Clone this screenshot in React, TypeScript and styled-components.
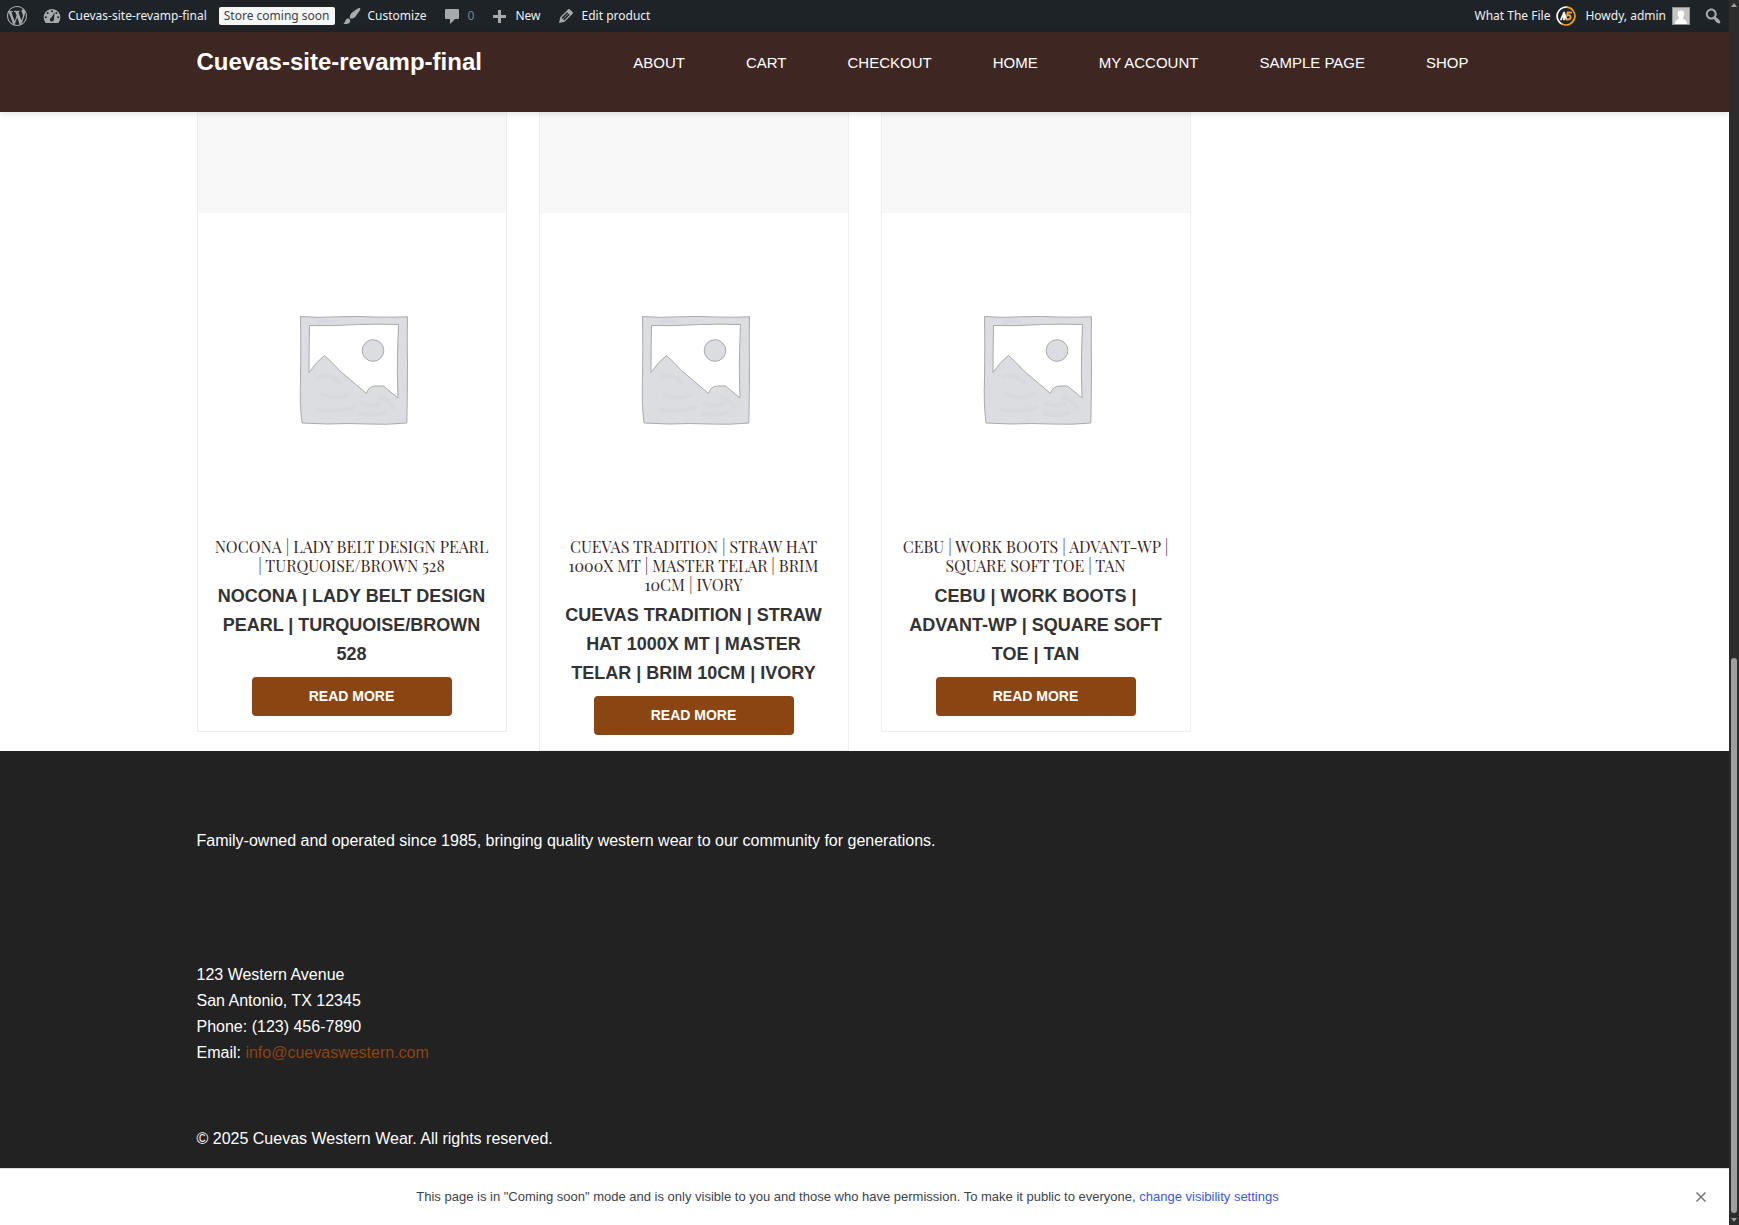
import React from "react";
import styled, { createGlobalStyle } from "styled-components";

const sans = `"Liberation Sans", Arial, Helvetica, sans-serif`;
const ui = `"Segoe UI", "Noto Sans", "Open Sans", sans-serif`;

const GlobalStyle = createGlobalStyle`
  *, *::before, *::after { box-sizing: border-box; }
  body { margin: 0; background: #fff; color: #333; font-family: ${sans}; font-size: 16px; }
  p, h1, h2, h3, ul { margin: 0; padding: 0; }
  a { color: inherit; text-decoration: none; }
`;

const Viewport = styled.div`
  display: grid;
  grid-template-columns: minmax(0, 1fr) 10px;
  min-height: 100vh;
`;

const Page = styled.div`
  display: flex;
  flex-direction: column;
`;

/* Admin bar */
const AdminBar = styled.nav`
  display: flex;
  justify-content: space-between;
  height: 32px;
  padding: 0 6px;
  background: #1d2327;
  color: #f0f0f1;
  font: 12px/32px ${ui};
`;

const BarGroup = styled.div`
  display: flex;
  align-items: center;
`;

const BarLink = styled.a<{ $muted?: boolean; $tight?: boolean }>`
  display: flex;
  align-items: center;
  gap: 6px;
  padding: 0 ${(p) => (p.$tight ? 3 : 9)}px 0 6px;
  height: 32px;
  white-space: nowrap;
  color: ${(p) => (p.$muted ? "#7d8286" : "#f0f0f1")};
`;

const LogoLink = styled.a`
  display: flex;
  padding: 0 9px 0 1px;
`;

const Badge = styled.a`
  margin: 0 1px 0 3px;
  padding: 0 5px;
  border-radius: 2px;
  background: #f6f7f7;
  color: #3c434a;
  line-height: 18px;
  white-space: nowrap;
`;

const SearchButton = styled.button`
  display: flex;
  margin: 0;
  padding: 0 0 0 4px;
  border: 0;
  background: none;
`;

const Icon = styled.svg`
  display: block;
  flex: none;
  width: 20px;
  height: 20px;
  fill: #a7aaad;
`;

const Avatar = styled(Icon)`
  width: 18px;
  height: 18px;
`;

/* Site header */
const Header = styled.header`
  position: relative;
  z-index: 1;
  min-height: 80px;
  background: #3e2723;
  box-shadow: 0 2px 5px rgba(0, 0, 0, 0.1);
`;

const Container = styled.div`
  width: 100%;
  max-width: 1400px;
  margin: 0 auto;
  padding: 0 32px;
`;

const HeaderRow = styled(Container)`
  display: flex;
  justify-content: space-between;
  align-items: flex-start;
  padding-top: 12px;
`;

const SiteTitle = styled.a`
  color: #fff;
  font-size: 24px;
  font-weight: 700;
  line-height: 36px;
`;

const Menu = styled.ul`
  display: flex;
  gap: 61px;
  padding-right: 64px;
  list-style: none;
  color: #fff;
  font-size: 15px;
  line-height: 38px;
  text-transform: uppercase;
`;

/* Products */
const Products = styled(Container).attrs({ as: "main" })`
  display: grid;
  grid-template-columns: repeat(4, minmax(0, 1fr));
  align-items: start;
  gap: 32px;
`;

const Card = styled.article`
  border: 1px solid #eee;
  border-top: 0;
  background: #fff;
  text-align: center;
`;

const CardTop = styled.div`
  height: 101px;
  background: #f8f8f8;
`;

const Picture = styled.svg`
  display: block;
  width: 100%;
  aspect-ratio: 1;
`;

const CardBody = styled.div`
  padding: 16px 15px 15px;
`;

const CardTitle = styled.h2`
  color: #3e2723;
  font-family: "Playfair Display", "Liberation Serif", serif;
  font-size: 16px;
  font-weight: 400;
  line-height: 19px;
  text-transform: uppercase;
`;

const CardName = styled.p`
  margin: 7px 0 8px;
  font-size: 18px;
  font-weight: 700;
  line-height: 29px;
  text-transform: uppercase;
`;

const ReadMore = styled.button`
  width: 200px;
  height: 39px;
  padding: 0;
  border: 0;
  border-radius: 4px;
  background: #8b4513;
  color: #fff;
  font: 700 14px/39px ${sans};
  text-transform: uppercase;
`;

/* Footer */
const Footer = styled.footer`
  flex: 1;
  padding: 77px 0 16px;
  background: #222;
  color: #fff;
  line-height: 26px;
`;

const Address = styled.address`
  padding: 108px 0 60px;
  font-style: normal;

  a { color: #8b4513; }
`;

/* Coming soon notice */
const Notice = styled.aside`
  display: flex;
  align-items: center;
  height: 57px;
  border-top: 1px solid #ddd;
  background: #fff;
  color: #3c434a;
  font-size: 13px;
  line-height: 18px;

  p { flex: 1; padding-left: 4px; text-align: center; }
  a { color: #3858e9; }
`;

const CloseButton = styled.button`
  display: flex;
  margin: 0 18px 0 0;
  padding: 0;
  border: 0;
  background: none;
`;

/* Scroll bar */
const ScrollBar = styled.div`
  display: flex;
  flex-direction: column;
  align-items: center;
  padding: 3px 0;
  background: #2c2c2c;
`;

const Arrow = styled.svg`
  flex: none;
  width: 6px;
  height: 4px;
  fill: #9f9f9f;
`;

const Track = styled.div`
  display: grid;
  grid-template-rows: 651fr 555fr;
  flex: 1;
  width: 6px;
  padding-bottom: 5px;
`;

const Thumb = styled.div`
  grid-row: 2;
  border-radius: 3px;
  background: #9f9f9f;
`;

const paths = {
  wordpress:
    "M20 10c0-5.51-4.49-10-10-10C4.48 0 0 4.49 0 10c0 5.52 4.48 10 10 10 5.51 0 10-4.48 10-10zM7.78 15.37L4.37 6.22c.55-.02 1.17-.08 1.17-.08.5-.06.44-1.13-.06-1.11 0 0-1.45.11-2.37.11-.18 0-.37 0-.58-.01C4.12 2.69 6.87 1.11 10 1.11c2.33 0 4.45.87 6.05 2.34-.68-.11-1.65.39-1.65 1.58 0 .74.45 1.36.9 2.1.35.61.55 1.36.55 2.46 0 1.49-1.4 5-1.4 5l-3.03-8.37c.54-.02.82-.17.82-.17.5-.05.44-1.25-.06-1.22 0 0-1.44.12-2.38.12-.87 0-2.33-.12-2.33-.12-.5-.03-.56 1.2-.06 1.22l.92.08 1.26 3.41zM17.41 10c.24-.64.74-1.87.43-4.25.7 1.29 1.05 2.71 1.05 4.25 0 3.29-1.73 6.24-4.4 7.78.97-2.59 1.94-5.2 2.92-7.78zM6.1 18.09C3.12 16.65 1.11 13.53 1.11 10c0-1.3.23-2.48.72-3.59C3.25 10.3 4.67 14.2 6.1 18.09zm4.03-6.63l2.58 6.98c-.86.29-1.76.45-2.71.45-.79 0-1.57-.11-2.29-.33.81-2.38 1.62-4.74 2.42-7.1z",
  brush:
    "M18.33 3.57s.27-.8-.31-1.36c-.53-.52-1.22-.24-1.22-.24-.61.3-5.76 3.47-7.67 5.57-.86.96-2.06 3.79-1.09 4.82.92.98 3.96-.17 4.79-1 2.06-2.06 5.21-7.17 5.5-7.79zM1.4 17.65c2.37-1.56 1.46-3.41 3.23-4.64.93-.65 2.22-.62 3.08.29.63.67.8 2.57-.16 3.46-1.57 1.45-4 1.55-6.15.89z",
  comment: "M4 3h12q1 0 1 1v8q0 1-1 1h-3l-5 5v-5H4q-1 0-1-1V4q0-1 1-1z",
  plus: "M17 9v3h-5v5H9v-5H4V9h5V4h3v5z",
  pencil:
    "M13.89 3.39l2.71 2.72c.46.46.42 1.24.03 1.64l-8.01 8.02-5.56 1.16 1.16-5.58s7.6-7.63 7.99-8.03c.39-.39 1.22-.39 1.68.07zm-2.73 2.79l-5.59 5.61 1.11 1.11 5.54-5.65zm-2.97 8.23l5.58-5.6-1.07-1.08-5.59 5.6z",
  search:
    "M12.14 4.18c1.87 1.87 2.11 4.75.72 6.89.12.1.22.21.36.31.2.16.47.36.81.59.34.24.56.39.66.47.42.31.73.57.94.78.32.32.6.65.84 1 .25.35.44.69.59 1.04.14.35.21.68.18 1-.02.32-.14.59-.36.81s-.49.34-.81.36c-.31.02-.65-.04-.99-.19-.35-.14-.7-.34-1.04-.59-.35-.24-.68-.52-1-.84-.21-.21-.47-.52-.77-.93-.1-.13-.25-.35-.47-.66-.22-.32-.4-.57-.56-.78-.16-.2-.29-.35-.44-.5-2.07 1.09-4.69.76-6.44-.98-2.14-2.15-2.14-5.64 0-7.78 2.15-2.15 5.63-2.15 7.78 0zm-1.41 6.36c1.36-1.37 1.36-3.58 0-4.95-1.37-1.37-3.59-1.37-4.95 0-1.37 1.37-1.37 3.58 0 4.95 1.36 1.37 3.58 1.37 4.95 0z",
};

const Glyph = ({ name }: { name: keyof typeof paths }) => (
  <Icon viewBox="0 0 20 20" aria-hidden="true">
    <path d={paths[name]} />
  </Icon>
);

const DashboardIcon = () => (
  <Icon viewBox="0 0 20 20" aria-hidden="true">
    <path d="M3.76 17h12.48c1.34-1.63 2.01-3.6 2.01-5.75C18.25 6.69 14.56 3 10 3S1.75 6.69 1.75 11.25C1.75 13.4 2.42 15.37 3.76 17z" />
    <g fill="#1d2327">
      <circle cx="10" cy="5.2" r="1" />
      <circle cx="5.6" cy="7" r="1" />
      <circle cx="14.4" cy="7" r="1" />
      <circle cx="3.9" cy="11.2" r="1" />
      <circle cx="16.1" cy="11.2" r="1" />
      <path d="M12.6 6.6l-.7 7a2 2 0 1 1-2.6-1.9z" />
    </g>
  </Icon>
);

const FileLogo = () => (
  <Icon viewBox="0 0 20 20" aria-hidden="true">
    <g fill="none" strokeLinecap="round">
      <path d="M11 1.2A8.9 8.9 0 0 0 6 18" stroke="#fff" strokeWidth="1.7" />
      <path d="M11 1.2A8.9 8.9 0 1 1 6 18" stroke="#f7a01d" strokeWidth="1.7" />
      <path d="M5 13.500L8 6.500v7M8 6.500l2.500 7" stroke="#fff" strokeWidth="1.8" />
      <path d="M15 6.500h-3.300l-.5 3c2-.7 3.500-.2 3.400 1.700 0 1.800-1.800 2.600-3.700 2" stroke="#f7a01d" strokeWidth="2" />
    </g>
  </Icon>
);

const AvatarIcon = () => (
  <Avatar viewBox="0 0 18 18" aria-hidden="true">
    <rect width="18" height="18" fill="#8c8f94" />
    <rect x="1" y="1" width="16" height="16" fill="#c5c5c5" />
    <path d="M3 17c0-3 1.600-4.500 4-5V10.500C5 8.500 4.900 3.600 9 3.600s4 4.900 2 6.900V12c2.400.5 4 2 4 5z" fill="#fff" />
  </Avatar>
);

const Placeholder = () => (
  <Picture viewBox="0.5 -0.5 308 308" role="img" aria-label="Awaiting product image">
    <g fill="#dcdde1" stroke="#a9aaae" strokeWidth="1" strokeLinejoin="round">
      <path
        fillRule="evenodd"
        d="M103 103Q120 104.500 140 103.300Q160 102.500 176 103.500Q195 104 210 103.300Q209.500 130 210 150Q210 180 209.300 209.500Q190 211.500 170 210.500Q150 209.500 130 210.500L104.500 209.500Q102 190 103 165Q103.500 130 103 103Z
           M112 112Q111.500 135 111.500 159Q119 148 127 142Q134 148 142 157L169 180Q171 172.500 178 172.500L186 172.500L200.500 184.500Q199.500 160 200 140L201 111Q180 110.300 160 111Q135 112.700 112 112Z"
      />
      <circle cx="175.500" cy="137" r="10.800" />
    </g>
    <g fill="none" stroke="#d1d2d7" strokeLinecap="round" strokeWidth="4" opacity=".3">
      <path d="M122 163q12 -3 20 6M125 181q14 6 27 0M120 196q15 4 35 -2M163 200q16 3 24 -1M182 184q9 2 14 10M122 108h16M165 190q10 4 18 0" />
    </g>
  </Picture>
);

const menu = ["About", "Cart", "Checkout", "Home", "My account", "Sample Page", "Shop"];

const products = [
  "Nocona | Lady Belt Design Pearl | Turquoise/Brown 528",
  "Cuevas Tradition | Straw Hat 1000x MT | Master Telar | Brim 10cm | Ivory",
  "Cebu | Work Boots | Advant-WP | Square Soft Toe | Tan",
];

export default function App() {
  return (
    <>
      <GlobalStyle />
      <Viewport>
        <Page>
          <AdminBar aria-label="Toolbar">
            <BarGroup>
              <LogoLink href="#" aria-label="About WordPress"><Glyph name="wordpress" /></LogoLink>
              <BarLink href="#"><DashboardIcon />Cuevas-site-revamp-final</BarLink>
              <Badge href="#">Store coming soon</Badge>
              <BarLink href="#"><Glyph name="brush" />Customize</BarLink>
              <BarLink href="#" $muted><Glyph name="comment" />0</BarLink>
              <BarLink href="#"><Glyph name="plus" />New</BarLink>
              <BarLink href="#"><Glyph name="pencil" />Edit product</BarLink>
            </BarGroup>
            <BarGroup>
              <BarLink href="#" $tight>What The File<FileLogo /></BarLink>
              <BarLink href="#">Howdy, admin<AvatarIcon /></BarLink>
              <SearchButton type="button" aria-label="Search"><Glyph name="search" /></SearchButton>
            </BarGroup>
          </AdminBar>

          <Header>
            <HeaderRow>
              <SiteTitle href="#">Cuevas-site-revamp-final</SiteTitle>
              <nav aria-label="Primary">
                <Menu>
                  {menu.map((item) => (
                    <li key={item}><a href="#">{item}</a></li>
                  ))}
                </Menu>
              </nav>
            </HeaderRow>
          </Header>

          <Products>
            {products.map((name) => (
              <Card key={name}>
                <CardTop />
                <Placeholder />
                <CardBody>
                  <CardTitle>{name}</CardTitle>
                  <CardName>{name}</CardName>
                  <ReadMore type="button">Read more</ReadMore>
                </CardBody>
              </Card>
            ))}
          </Products>

          <Footer>
            <Container>
              <p>Family-owned and operated since 1985, bringing quality western wear to our community for generations.</p>
              <Address>
                123 Western Avenue<br />
                San Antonio, TX 12345<br />
                Phone: (123) 456-7890<br />
                Email: <a href="#">info@cuevaswestern.com</a>
              </Address>
              <p>© 2025 Cuevas Western Wear. All rights reserved.</p>
            </Container>
          </Footer>

          <Notice>
            <p>
              This page is in "Coming soon" mode and is only visible to you and those who have permission. To make it
              public to everyone, <a href="#">change visibility settings</a>
            </p>
            <CloseButton type="button" aria-label="Dismiss">
              <svg width="20" height="20" viewBox="0 0 20 20" stroke="#757575" strokeWidth="1.500">
                <path d="M5.500 5.500l9 9M14.500 5.500l-9 9" />
              </svg>
            </CloseButton>
          </Notice>
        </Page>
        <ScrollBar aria-hidden="true">
          <Arrow viewBox="0 0 6 4"><path d="M3 0l3 4H0z" /></Arrow>
          <Track><Thumb /></Track>
          <Arrow viewBox="0 0 6 4"><path d="M0 0h6L3 4z" /></Arrow>
        </ScrollBar>
      </Viewport>
    </>
  );
}
